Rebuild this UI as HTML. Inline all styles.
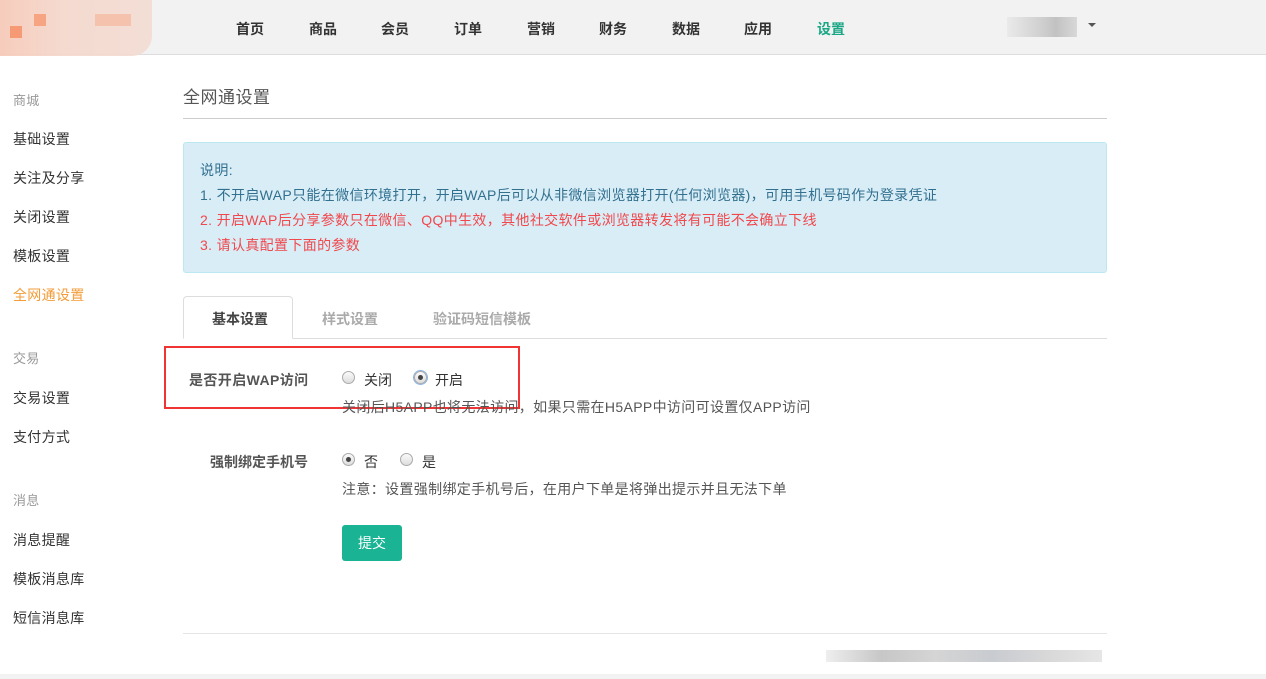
<!DOCTYPE html>
<html><head><meta charset="utf-8"><style>
*{margin:0;padding:0;box-sizing:border-box}
body{width:1266px;height:679px;overflow:hidden;background:#fff;font-family:"Liberation Sans","Noto Sans CJK SC",sans-serif;font-size:14px;color:#333;position:relative}
.hd{position:absolute;left:0;top:0;width:1266px;height:55px;background:#f2f2f2;border-bottom:1px solid #ddd}
.nav a{position:absolute;top:19px;font-weight:bold;color:#333;font-size:14px}
.ab{position:absolute}
.sb{position:absolute;left:13px;font-size:14px;color:#333;letter-spacing:.3px}
.sh{color:#999;font-size:13px}
.tx{position:absolute;white-space:nowrap}
.radio{position:absolute;width:13px;height:13px;border-radius:50%;border:1px solid #aaa;background:linear-gradient(#fafafa,#ddd)}
.radio.on::after{content:"";position:absolute;left:3px;top:3px;width:5px;height:5px;border-radius:50%;background:#444}
.info{font-size:14px;letter-spacing:.35px}
</style></head><body>
<div class="hd">
 <div class="ab" style="left:0;top:0;width:152px;height:56px;background:linear-gradient(90deg,#f7c8b6,#f5d7cb 40%,#f3dcd3);border-radius:0 0 20px 0;opacity:.9"></div>
 <div class="ab" style="left:10px;top:26px;width:12px;height:12px;background:#f69a76"></div>
 <div class="ab" style="left:34px;top:14px;width:12px;height:12px;background:#f6a482"></div>
 <div class="ab" style="left:95px;top:14px;width:36px;height:12px;background:#f5c2ae"></div>
 <div class="nav">
 <a style="left:236px">首页</a><a style="left:309px">商品</a><a style="left:381px">会员</a><a style="left:454px">订单</a><a style="left:527px">营销</a><a style="left:599px">财务</a><a style="left:672px">数据</a><a style="left:744px">应用</a><a style="left:817px;color:#1aa785">设置</a>
 </div>
 <div class="ab" style="left:1007px;top:17px;width:70px;height:20px;background:linear-gradient(90deg,#eaeaea,#cfcfcf 50%,#c2c2c2 70%,#d8d8d8)"></div>
 <div class="ab" style="left:1088px;top:23px;border-left:4px solid transparent;border-right:4px solid transparent;border-top:4px solid #555"></div>
</div>
<div class="sb sh" style="top:90px">商城</div>
<div class="sb" style="top:129px">基础设置</div>
<div class="sb" style="top:168px">关注及分享</div>
<div class="sb" style="top:207px">关闭设置</div>
<div class="sb" style="top:246px">模板设置</div>
<div class="sb" style="top:285px;color:#f39c38">全网通设置</div>
<div class="sb sh" style="top:348px">交易</div>
<div class="sb" style="top:388px">交易设置</div>
<div class="sb" style="top:427px">支付方式</div>
<div class="sb sh" style="top:490px">消息</div>
<div class="sb" style="top:530px">消息提醒</div>
<div class="sb" style="top:569px">模板消息库</div>
<div class="sb" style="top:608px">短信消息库</div>

<div class="tx" style="left:183px;top:83px;font-size:17px;color:#555;letter-spacing:.5px">全网通设置</div>
<div class="ab" style="left:183px;top:118px;width:924px;height:1px;background:#ccc"></div>
<div class="ab" style="left:183px;top:142px;width:924px;height:131px;background:#d9edf7;border:1px solid #bce8f1;border-radius:3px"></div>
<div class="tx info" style="left:200px;top:160px;color:#31708f">说明:</div>
<div class="tx info" style="left:200px;top:185px;color:#31708f">1. 不开启WAP只能在微信环境打开，开启WAP后可以从非微信浏览器打开(任何浏览器)，可用手机号码作为登录凭证</div>
<div class="tx info" style="left:200px;top:210px;color:#f0484c">2. 开启WAP后分享参数只在微信、QQ中生效，其他社交软件或浏览器转发将有可能不会确立下线</div>
<div class="tx info" style="left:200px;top:235px;color:#f0484c">3. 请认真配置下面的参数</div>

<div class="ab" style="left:183px;top:338px;width:924px;height:1px;background:#ddd"></div>
<div class="ab" style="left:183px;top:296px;width:110px;height:43px;background:#fff;border:1px solid #ddd;border-bottom-color:#fff;border-radius:4px 4px 0 0"></div>
<div class="tx" style="left:212px;top:309px;font-weight:bold;font-size:14px;color:#444">基本设置</div>
<div class="tx" style="left:322px;top:309px;font-weight:bold;font-size:14px;color:#aaa">样式设置</div>
<div class="tx" style="left:433px;top:309px;font-weight:bold;font-size:14px;color:#aaa">验证码短信模板</div>

<div class="ab" style="left:164px;top:346px;width:356px;height:63px;border:2px solid #f03333"></div>
<div class="tx" style="left:189px;top:370px;font-weight:bold;font-size:14px;color:#555;letter-spacing:.4px">是否开启WAP访问</div>
<div class="radio" style="left:342px;top:371px"></div>
<div class="tx" style="left:364px;top:370px;font-size:14px">关闭</div>
<div class="radio on" style="left:414px;top:371px;box-shadow:0 0 0 1px #8ab4e6"></div>
<div class="tx" style="left:435px;top:370px;font-size:14px">开启</div>
<div class="tx info" style="left:342px;top:397px;color:#555">关闭后H5APP也将无法访问，如果只需在H5APP中访问可设置仅APP访问</div>

<div class="tx" style="left:210px;top:452px;font-weight:bold;font-size:14px;color:#555">强制绑定手机号</div>
<div class="radio on" style="left:342px;top:453px"></div>
<div class="tx" style="left:364px;top:452px;font-size:14px">否</div>
<div class="radio" style="left:400px;top:453px"></div>
<div class="tx" style="left:422px;top:452px;font-size:14px">是</div>
<div class="tx info" style="left:342px;top:479px;color:#555">注意：设置强制绑定手机号后，在用户下单是将弹出提示并且无法下单</div>
<div class="ab" style="left:342px;top:525px;width:60px;height:36px;background:#1ab394;border-radius:3px;color:#fff;font-size:14px;text-align:center;line-height:36px">提交</div>

<div class="ab" style="left:183px;top:633px;width:924px;height:1px;background:#e5e5e5"></div>
<div class="ab" style="left:826px;top:650px;width:276px;height:12px;background:linear-gradient(90deg,#eee,#c7c7c7 20%,#d5d5d5 40%,#c8cbd0 60%,#d8d8d8 80%,#e6e6e6)"></div>
<div class="ab" style="left:0;top:674px;width:1266px;height:5px;background:#f2f2f2"></div>
</body></html>
